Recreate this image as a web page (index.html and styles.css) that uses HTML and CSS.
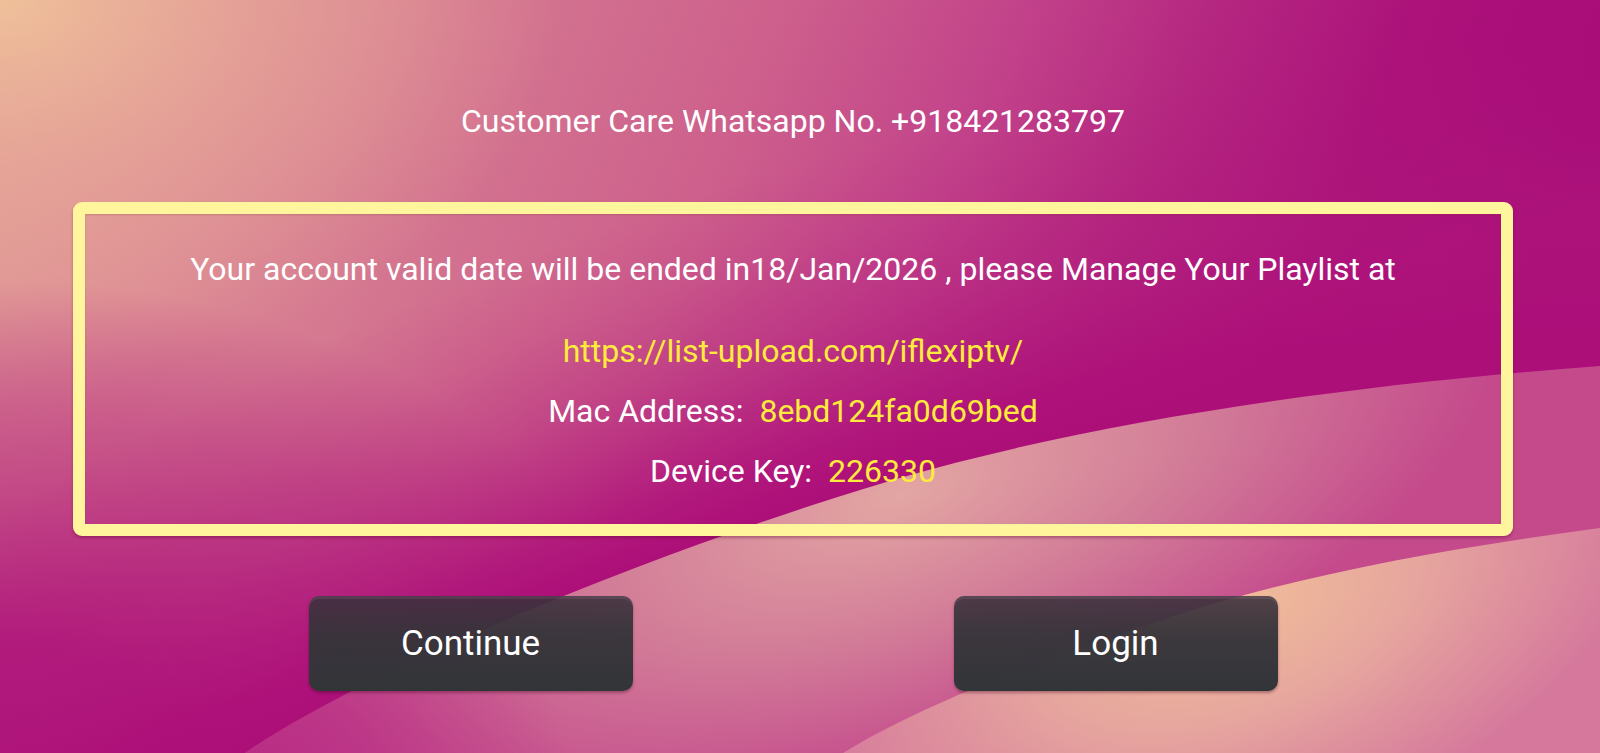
FILE: index.html
```html
<!DOCTYPE html>
<html lang="en">
<head>
    <meta charset="UTF-8">
    <meta name="viewport" content="width=device-width, initial-scale=1.0">
    <title>Account Info</title>
    <link rel="stylesheet" href="styles.css">
</head>
<body>
    <!-- wallpaper -->
    <svg class="backdrop" viewBox="0 0 1600 753" preserveAspectRatio="none" aria-hidden="true">
        <defs>
            <linearGradient id="base" gradientUnits="userSpaceOnUse" x1="0" y1="0" x2="1400" y2="600">
                <stop offset="0" stop-color="#e09a96"/>
                <stop offset="0.15" stop-color="#dc8a94"/>
                <stop offset="0.3" stop-color="#d47690"/>
                <stop offset="0.48" stop-color="#cd5f8c"/>
                <stop offset="0.62" stop-color="#c2428a"/>
                <stop offset="0.74" stop-color="#b42680"/>
                <stop offset="0.86" stop-color="#ac127a"/>
                <stop offset="1" stop-color="#a80c78"/>
            </linearGradient>
            <radialGradient id="peach" gradientUnits="userSpaceOnUse" cx="0" cy="0" r="1"
                gradientTransform="translate(0 0) scale(560 380)">
                <stop offset="0" stop-color="#efc09a" stop-opacity="1"/>
                <stop offset="0.45" stop-color="#e9ac98" stop-opacity="0.6"/>
                <stop offset="1" stop-color="#e9ac98" stop-opacity="0"/>
            </radialGradient>
            <radialGradient id="corner" gradientUnits="userSpaceOnUse" cx="0" cy="0" r="1"
                gradientTransform="translate(0 800) scale(700 520)">
                <stop offset="0" stop-color="#ad0f79" stop-opacity="1"/>
                <stop offset="0.3" stop-color="#ad0f79" stop-opacity="0.9"/>
                <stop offset="0.75" stop-color="#b01a7c" stop-opacity="0.4"/>
                <stop offset="1" stop-color="#b01a7c" stop-opacity="0"/>
            </radialGradient>
            <!-- arcs of this circle follow the first wave edge -->
            <radialGradient id="ribbon" gradientUnits="userSpaceOnUse" cx="1717" cy="3342" r="3400">
                <stop offset="0.876" stop-color="#ad0f79" stop-opacity="1"/>
                <stop offset="0.8906" stop-color="#ad0f79" stop-opacity="0.85"/>
                <stop offset="0.9259" stop-color="#b01a7c" stop-opacity="0.4"/>
                <stop offset="0.9494" stop-color="#b01a7c" stop-opacity="0.15"/>
                <stop offset="0.973" stop-color="#b01a7c" stop-opacity="0"/>
            </radialGradient>
            <radialGradient id="band" gradientUnits="userSpaceOnUse" cx="0" cy="0" r="1"
                gradientTransform="translate(900 495) rotate(-18) scale(620 260)">
                <stop offset="0" stop-color="#e3a6a3"/>
                <stop offset="0.5" stop-color="#d27c98"/>
                <stop offset="1" stop-color="#c44a8c"/>
            </radialGradient>
            <radialGradient id="bandDark" gradientUnits="userSpaceOnUse" cx="0" cy="0" r="1"
                gradientTransform="translate(250 770) scale(320 220)">
                <stop offset="0" stop-color="#b52482" stop-opacity="0.8"/>
                <stop offset="1" stop-color="#b52482" stop-opacity="0"/>
            </radialGradient>
            <radialGradient id="glow" gradientUnits="userSpaceOnUse" cx="0" cy="0" r="1"
                gradientTransform="translate(1230 610) rotate(-20) scale(440 240)">
                <stop offset="0" stop-color="#f1bd99"/>
                <stop offset="0.45" stop-color="#e6a59e"/>
                <stop offset="1" stop-color="#d5789c"/>
            </radialGradient>
        </defs>

        <rect width="1600" height="753" fill="url(#base)"/>
        <rect width="1600" height="753" fill="url(#peach)"/>
        <rect width="1600" height="753" fill="url(#corner)"/>
        <rect width="1600" height="753" fill="url(#ribbon)"/>

        <!-- first wave -->
        <path fill="url(#band)"
            d="M1600,366 C1350,385 1100,420 900,478 C700,536 380,660 245,753 L1600,753 Z"/>
        <path fill="url(#bandDark)"
            d="M1600,366 C1350,385 1100,420 900,478 C700,536 380,660 245,753 L1600,753 Z"/>

        <!-- second wave -->
        <path fill="url(#glow)"
            d="M1600,528 C1450,548 1300,575 1180,614 C1060,653 930,700 843,753 L1600,753 Z"/>
    </svg>

    <main class="screen">
        <p class="care">Customer Care Whatsapp No. +918421283797</p>

        <section class="notice">
            <p class="notice-text">Your account valid date will be ended in18/Jan/2026 , please Manage Your Playlist at</p>
            <p class="notice-link">https://list-upload.com/iflexiptv/</p>
            <p class="notice-row">Mac Address: <span class="value">8ebd124fa0d69bed</span></p>
            <p class="notice-row">Device Key: <span class="value">226330</span></p>
        </section>

        <div class="actions">
            <button class="btn" type="button">Continue</button>
            <button class="btn" type="button">Login</button>
        </div>
    </main>
</body>
</html>
```

FILE: styles.css
```css
* {
    margin: 0;
    padding: 0;
    box-sizing: border-box;
    font-family: Roboto, 'Noto Sans', sans-serif;
}

html, body {
    width: 100%;
    height: 100%;
    overflow: hidden;
}

body {
    position: relative;
    background: #c2428a;
    color: #fff;
}

.backdrop {
    position: absolute;
    top: 0;
    left: 0;
    width: 100%;
    height: 100%;
    z-index: 0;
}

.screen {
    position: relative;
    z-index: 1;
    display: flex;
    flex-direction: column;
    align-items: stretch;
    padding: 101px 87px 0 73px;
}

.care {
    font-size: 32px;
    line-height: 40px;
    text-align: center;
    margin-bottom: 61px;
}

.notice {
    display: flex;
    flex-direction: column;
    align-items: center;
    padding: 35px 20px 33px;
    border: 12px solid #fff59c;
    border-radius: 9px;
    box-shadow: 0 2px 3px rgba(90, 0, 50, 0.35), inset 0 1px 2px rgba(120, 60, 40, 0.25);
    font-size: 32px;
    line-height: 40px;
}

.notice-text {
    margin-bottom: 42px;
}

.notice-link {
    color: #ffeb3b;
    margin-bottom: 20px;
}

.notice-row + .notice-row {
    margin-top: 20px;
}

.value {
    color: #ffeb3b;
    margin-left: 8px;
}

.actions {
    display: flex;
    justify-content: center;
    gap: 321px;
    margin-top: 60px;
}

.btn {
    width: 324px;
    height: 95px;
    font-size: 35px;
    color: #fff;
    border: none;
    border-radius: 10px;
    background: linear-gradient(180deg, rgba(60, 48, 60, 0.88) 0%, rgba(54, 52, 58, 0.96) 40%, #323538 100%);
    box-shadow: inset 0 3px 0 rgba(255, 255, 255, 0.07), 0 2px 3px rgba(60, 0, 30, 0.35);
    cursor: pointer;
}
```
